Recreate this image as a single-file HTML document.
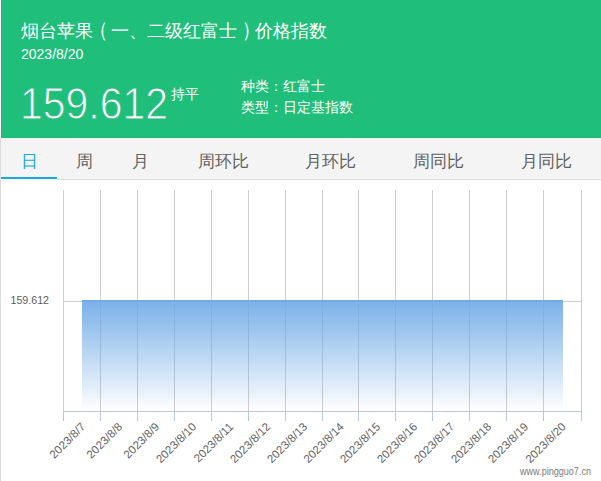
<!DOCTYPE html>
<html><head><meta charset="utf-8">
<style>
*{margin:0;padding:0;box-sizing:border-box}
html,body{width:601px;height:481px;overflow:hidden;background:#fff;font-family:"Liberation Sans",sans-serif}
#title,#chg,#kind,#type,.tab{font-weight:500}
.abs{position:absolute;white-space:nowrap}
#lb{position:absolute;left:0;top:138px;width:1px;height:343px;background:#dcdcdc}
#hdr{position:absolute;left:1px;top:0;width:600px;height:138px;background:#1fbe7b}
#title{left:21px;top:19px;font-size:18px;color:#fff;line-height:24px}
.pl,.pr{display:inline-block;transform-origin:50% 80%}
.pl{transform:translateX(-3.5px) scaleY(1.18)}
.pr{transform:translateX(4.5px) scaleY(1.18)}
#date{left:21px;top:44.5px;font-size:14px;color:#fff;line-height:18px}
#big{left:20px;top:80px;font-size:44px;color:#fff;line-height:48px;transform:scaleX(0.93);transform-origin:0 0;-webkit-text-stroke:1px #1fbe7b}
#chg{left:171px;top:85px;font-size:14px;color:#fff;line-height:18px}
#kind{left:241px;top:75.5px;font-size:14px;color:#fff;line-height:20px}
#type{left:241px;top:97px;font-size:14px;color:#fff;line-height:20px}
#tabs{position:absolute;left:1px;top:138px;width:600px;height:42px;background:#f4f4f4;border-bottom:1px solid #dddddd}
.tab{position:absolute;top:13.5px;font-size:17px;color:#626262;line-height:20px;text-align:center}
#ul{position:absolute;left:1px;top:177px;width:56px;height:2px;background:#18a8e2;box-shadow:0 1px 0 #fff}
</style></head><body>
<div id="lb"></div>
<div id="hdr"></div>
<div class="abs" id="title">烟台苹果<span class="pl">（</span>一、二级红富士<span class="pr">）</span>价格指数</div>
<div class="abs" id="date">2023/8/20</div>
<div class="abs" id="big">159.612</div>
<div class="abs" id="chg">持平</div>
<div class="abs" id="kind">种类：红富士</div>
<div class="abs" id="type">类型：日定基指数</div>
<div id="tabs">
<div class="tab" style="left:0;width:56px;color:#18a8e2">日</div>
<div class="tab" style="left:56px;width:55px">周</div>
<div class="tab" style="left:111px;width:56px">月</div>
<div class="tab" style="left:167px;width:110px">周环比</div>
<div class="tab" style="left:275px;width:108px">月环比</div>
<div class="tab" style="left:383px;width:108px">周同比</div>
<div class="tab" style="left:491px;width:108px">月同比</div>
</div>
<div id="ul"></div>
<svg width="601" height="481" style="position:absolute;left:0;top:0" id="chart">
<defs><linearGradient id="g" x1="0" y1="0" x2="0" y2="1"><stop offset="0" stop-color="#6ea9e6" stop-opacity="0.92"/><stop offset="1" stop-color="#6ea9e6" stop-opacity="0"/></linearGradient></defs>
<line x1="63.5" y1="190" x2="63.5" y2="411" stroke="#c8c8c8" stroke-opacity="0.9" stroke-width="1"/>
<line x1="100.5" y1="190" x2="100.5" y2="411" stroke="#c8c8c8" stroke-opacity="0.9" stroke-width="1"/>
<line x1="137.5" y1="190" x2="137.5" y2="411" stroke="#c8c8c8" stroke-opacity="0.9" stroke-width="1"/>
<line x1="174.5" y1="190" x2="174.5" y2="411" stroke="#c8c8c8" stroke-opacity="0.9" stroke-width="1"/>
<line x1="211.5" y1="190" x2="211.5" y2="411" stroke="#c8c8c8" stroke-opacity="0.9" stroke-width="1"/>
<line x1="248.5" y1="190" x2="248.5" y2="411" stroke="#c8c8c8" stroke-opacity="0.9" stroke-width="1"/>
<line x1="285.5" y1="190" x2="285.5" y2="411" stroke="#c8c8c8" stroke-opacity="0.9" stroke-width="1"/>
<line x1="322.5" y1="190" x2="322.5" y2="411" stroke="#c8c8c8" stroke-opacity="0.9" stroke-width="1"/>
<line x1="358.5" y1="190" x2="358.5" y2="411" stroke="#c8c8c8" stroke-opacity="0.9" stroke-width="1"/>
<line x1="395.5" y1="190" x2="395.5" y2="411" stroke="#c8c8c8" stroke-opacity="0.9" stroke-width="1"/>
<line x1="432.5" y1="190" x2="432.5" y2="411" stroke="#c8c8c8" stroke-opacity="0.9" stroke-width="1"/>
<line x1="469.5" y1="190" x2="469.5" y2="411" stroke="#c8c8c8" stroke-opacity="0.9" stroke-width="1"/>
<line x1="506.5" y1="190" x2="506.5" y2="411" stroke="#c8c8c8" stroke-opacity="0.9" stroke-width="1"/>
<line x1="543.5" y1="190" x2="543.5" y2="411" stroke="#c8c8c8" stroke-opacity="0.9" stroke-width="1"/>
<line x1="581.5" y1="190" x2="581.5" y2="411" stroke="#c8c8c8" stroke-opacity="0.9" stroke-width="1"/>
<line x1="63" y1="301.5" x2="582" y2="301.5" stroke="#cccccc" stroke-width="1"/>
<rect x="82" y="300" width="481" height="111" fill="url(#g)"/>
<line x1="82" y1="300.5" x2="563" y2="300.5" stroke="#6ea8e6" stroke-width="1"/>
<line x1="63" y1="411.5" x2="582" y2="411.5" stroke="#b9c9dc" stroke-width="1"/>
<line x1="63.5" y1="411" x2="63.5" y2="421" stroke="#b9c9dc" stroke-width="1"/>
<line x1="100.5" y1="411" x2="100.5" y2="421" stroke="#b9c9dc" stroke-width="1"/>
<line x1="137.5" y1="411" x2="137.5" y2="421" stroke="#b9c9dc" stroke-width="1"/>
<line x1="174.5" y1="411" x2="174.5" y2="421" stroke="#b9c9dc" stroke-width="1"/>
<line x1="211.5" y1="411" x2="211.5" y2="421" stroke="#b9c9dc" stroke-width="1"/>
<line x1="248.5" y1="411" x2="248.5" y2="421" stroke="#b9c9dc" stroke-width="1"/>
<line x1="285.5" y1="411" x2="285.5" y2="421" stroke="#b9c9dc" stroke-width="1"/>
<line x1="322.5" y1="411" x2="322.5" y2="421" stroke="#b9c9dc" stroke-width="1"/>
<line x1="358.5" y1="411" x2="358.5" y2="421" stroke="#b9c9dc" stroke-width="1"/>
<line x1="395.5" y1="411" x2="395.5" y2="421" stroke="#b9c9dc" stroke-width="1"/>
<line x1="432.5" y1="411" x2="432.5" y2="421" stroke="#b9c9dc" stroke-width="1"/>
<line x1="469.5" y1="411" x2="469.5" y2="421" stroke="#b9c9dc" stroke-width="1"/>
<line x1="506.5" y1="411" x2="506.5" y2="421" stroke="#b9c9dc" stroke-width="1"/>
<line x1="543.5" y1="411" x2="543.5" y2="421" stroke="#b9c9dc" stroke-width="1"/>
<line x1="581.5" y1="411" x2="581.5" y2="421" stroke="#b9c9dc" stroke-width="1"/>
<text transform="translate(86.0,427.5) rotate(-45)" text-anchor="end" font-size="11.5" fill="#5f5f5f">2023/8/7</text>
<text transform="translate(123.0,427.5) rotate(-45)" text-anchor="end" font-size="11.5" fill="#5f5f5f">2023/8/8</text>
<text transform="translate(160.0,427.5) rotate(-45)" text-anchor="end" font-size="11.5" fill="#5f5f5f">2023/8/9</text>
<text transform="translate(197.0,427.5) rotate(-45)" text-anchor="end" font-size="11.5" fill="#5f5f5f">2023/8/10</text>
<text transform="translate(234.0,427.5) rotate(-45)" text-anchor="end" font-size="11.5" fill="#5f5f5f">2023/8/11</text>
<text transform="translate(271.0,427.5) rotate(-45)" text-anchor="end" font-size="11.5" fill="#5f5f5f">2023/8/12</text>
<text transform="translate(308.0,427.5) rotate(-45)" text-anchor="end" font-size="11.5" fill="#5f5f5f">2023/8/13</text>
<text transform="translate(344.5,427.5) rotate(-45)" text-anchor="end" font-size="11.5" fill="#5f5f5f">2023/8/14</text>
<text transform="translate(381.0,427.5) rotate(-45)" text-anchor="end" font-size="11.5" fill="#5f5f5f">2023/8/15</text>
<text transform="translate(418.0,427.5) rotate(-45)" text-anchor="end" font-size="11.5" fill="#5f5f5f">2023/8/16</text>
<text transform="translate(455.0,427.5) rotate(-45)" text-anchor="end" font-size="11.5" fill="#5f5f5f">2023/8/17</text>
<text transform="translate(492.0,427.5) rotate(-45)" text-anchor="end" font-size="11.5" fill="#5f5f5f">2023/8/18</text>
<text transform="translate(529.0,427.5) rotate(-45)" text-anchor="end" font-size="11.5" fill="#5f5f5f">2023/8/19</text>
<text transform="translate(566.5,427.5) rotate(-45)" text-anchor="end" font-size="11.5" fill="#5f5f5f">2023/8/20</text>
<text x="10.5" y="303.5" font-size="11" textLength="38.5" lengthAdjust="spacingAndGlyphs" fill="#5c5c5c">159.612</text>
<text x="520" y="475" font-size="10.5" textLength="71" lengthAdjust="spacingAndGlyphs" fill="#7a7a7a">www.pingguo7.cn</text>
</svg>
</body></html>
